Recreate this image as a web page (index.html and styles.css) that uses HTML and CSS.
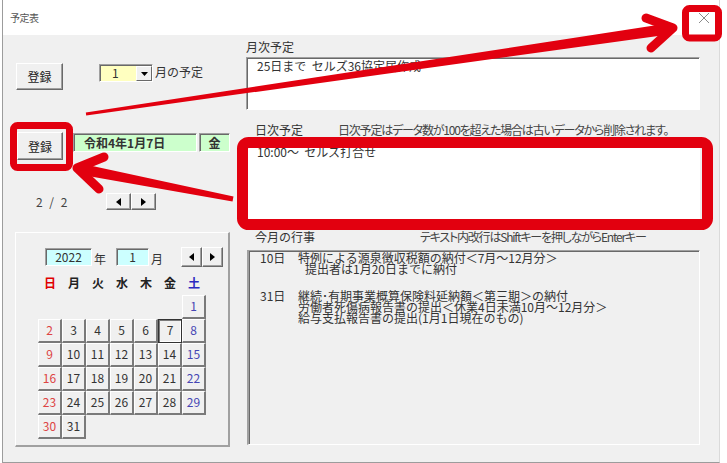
FILE: index.html
```html
<!DOCTYPE html>
<html lang="ja">
<head>
    <meta charset="UTF-8">
    <title>予定表</title>
    <link rel="stylesheet" href="styles.css">
</head>
<body>
    <div class="window">
        <div class="titlebar">
            <span class="title">予定表</span>
            <span class="close">
                <svg width="12" height="12" viewBox="0 0 12 12"><path d="M1 1L11 11M11 1L1 11" stroke="#8a8a8a" stroke-width="1"/></svg>
            </span>
        </div>

        <div class="form">
            <div class="side">
                <div class="month-row">
                    <button class="btn">登録</button>
                    <div class="combo">
                        <span class="combo-val">1</span>
                        <span class="combo-drop"><svg width="7" height="4" viewBox="0 0 7 4"><polygon points="0,0 7,0 3.5,4"/></svg></span>
                    </div>
                    <span class="combo-lbl">月の予定</span>
                </div>

                <div class="date-row">
                    <button class="btn btn-day">登録</button>
                    <span class="field green date">令和4年1月7日</span>
                    <span class="field green dow">金</span>
                </div>

                <div class="page-row">
                    <span class="pager">2 / 2</span>
                    <div class="spin">
                        <button class="spin-btn"><svg width="5" height="8" viewBox="0 0 5 8"><polygon points="5,0 5,8 0,4"/></svg></button>
                        <button class="spin-btn"><svg width="5" height="8" viewBox="0 0 5 8"><polygon points="0,0 0,8 5,4"/></svg></button>
                    </div>
                </div>

                <div class="calendar">
                    <div class="cal-head">
                        <span class="field cyan year">2022</span>
                        <span class="cal-unit">年</span>
                        <span class="field cyan mon">1</span>
                        <span class="cal-unit">月</span>
                        <div class="spin spin-cal">
                            <button class="spin-btn"><svg width="5" height="8" viewBox="0 0 5 8"><polygon points="5,0 5,8 0,4"/></svg></button>
                            <button class="spin-btn"><svg width="5" height="8" viewBox="0 0 5 8"><polygon points="0,0 0,8 5,4"/></svg></button>
                        </div>
                    </div>
                    <div class="cal-week">
                        <span class="sun">日</span><span>月</span><span>火</span><span>水</span><span>木</span><span>金</span><span class="sat">土</span>
                    </div>
                    <div class="cal-days">
                        <span class="day sat first">1</span>
                        <span class="day sun">2</span><span class="day">3</span><span class="day">4</span><span class="day">5</span><span class="day">6</span><span class="day sel">7</span><span class="day sat">8</span>
                        <span class="day sun">9</span><span class="day">10</span><span class="day">11</span><span class="day">12</span><span class="day">13</span><span class="day">14</span><span class="day sat">15</span>
                        <span class="day sun">16</span><span class="day">17</span><span class="day">18</span><span class="day">19</span><span class="day">20</span><span class="day">21</span><span class="day sat">22</span>
                        <span class="day sun">23</span><span class="day">24</span><span class="day">25</span><span class="day">26</span><span class="day">27</span><span class="day">28</span><span class="day sat">29</span>
                        <span class="day sun">30</span><span class="day">31</span>
                    </div>
                </div>
            </div>

            <div class="main">
                <div class="cap cap-month">月次予定</div>
                <div class="box monthly">25日まで&nbsp;&nbsp;セルズ36協定届作成</div>

                <div class="cap cap-daily"><span class="cap-name">日次予定</span><span class="note">日次予定はデータ数が100を超えた場合は古いデータから削除されます。</span></div>
                <div class="box daily">10:00～&nbsp;&nbsp;セルズ打合せ</div>

                <div class="cap cap-events"><span class="cap-name wide">今月の行事</span><span class="note">テキスト内改行はShiftキーを押しながらEnterキー</span></div>
                <div class="box events">
                    <div class="ev">
                        <span class="ev-day">10日</span>
                        <div class="ev-text">
                            <div>特例による源泉徴収税額の納付＜7月～12月分＞</div>
                            <div class="indent">提出者は1月20日までに納付</div>
                        </div>
                    </div>
                    <div class="ev ev-gap">
                        <span class="ev-day">31日</span>
                        <div class="ev-text">
                            <div>継続･有期事業概算保険料延納額＜第三期＞の納付</div>
                            <div>労働者死傷病報告書の提出＜休業4日未満10月～12月分＞</div>
                            <div>給与支払報告書の提出(1月1日現在のもの)</div>
                        </div>
                    </div>
                </div>
            </div>
        </div>
    </div>

    <!-- annotation marks drawn over the screenshot -->
    <svg class="marks" width="727" height="463" viewBox="0 0 727 463">
        <g fill="none" stroke="#e2000f" stroke-linejoin="round">
            <rect x="685.5" y="8.5" width="33" height="29.5" rx="4" stroke-width="7"/>
            <rect x="13.5" y="125.5" width="56" height="42" rx="4" stroke-width="7"/>
            <rect x="242.5" y="142.5" width="465" height="82" rx="6" stroke-width="11"/>
        </g>
        <g fill="#e2000f">
            <polygon points="86.2,115.5 85.8,112.5 667.2,23.6 668.8,34.4"/>
            <polygon points="233.5,196.5 232.5,201.5 80.9,174.8 83.1,164"/>
        </g>
        <g fill="none" stroke="#e2000f" stroke-width="9" stroke-linecap="round" stroke-linejoin="round">
            <polyline points="646,18 673,28 651,48"/>
            <polyline points="104,157 77,168 99,189"/>
        </g>
    </svg>
</body>
</html>
```

FILE: styles.css
```css
* { box-sizing: border-box; }
body { margin: 0; position: relative; background: #fff; font-family: "Noto Sans CJK JP", sans-serif; font-size: 12px; color: #333; }
button { font-family: inherit; font-size: 12px; color: #222; padding: 0; }

.window { width: 718px; height: 463px; margin-left: 2px; border-left: 1px solid #9c9c9c; border-right: 1px solid #dadada; border-bottom: 1px solid #9c9c9c; background: #f0f0f0; }
.titlebar { height: 35px; background: #fff; display: flex; align-items: center; justify-content: space-between; padding-left: 7px; }
.title { font-size: 10px; color: #555; letter-spacing: -0.5px; }
.close { width: 30px; height: 30px; display: flex; align-items: center; justify-content: center; }

.form { display: flex; height: 427px; }
.side { width: 234px; }
.main { flex: 1; padding-left: 9px; }

/* raised / sunken control edges */
.btn { width: 47px; height: 27px; background: #f0f0f0; border: 1px solid; border-color: #fff #696969 #696969 #fff; box-shadow: inset -1px -1px #a0a0a0; }
.field { display: flex; align-items: center; justify-content: center; border: 1px solid; border-color: #a0a0a0 #fff #fff #a0a0a0; box-shadow: inset 1px 1px #696969; line-height: 14px; }
.green { background: #ccffcc; }
.cyan { background: #ccffff; }

.month-row { display: flex; align-items: flex-start; margin-top: 28px; padding-left: 13px; }
.combo { display: flex; width: 54px; height: 18px; margin: 1px 0 0 36px; border: 1px solid; border-color: #a0a0a0 #fff #fff #a0a0a0; box-shadow: inset 1px 1px #696969; background: #ffffc0; }
.combo-val { flex: 1; padding: 1px 0 0 12px; line-height: 14px; }
.combo-drop { width: 16px; display: flex; align-items: center; justify-content: center; background: #f0f0f0; border: 1px solid; border-color: #fff #696969 #696969 #fff; margin: 1px 0 0 0; }
.combo-lbl { margin: 2px 0 0 2px; line-height: 14px; }

.date-row { display: flex; align-items: flex-start; margin-top: 42px; padding-left: 14px; }
.btn-day { width: 46px; height: 28px; }
.date { width: 124px; height: 19px; margin: 1px 0 0 10px; font-weight: bold; justify-content: flex-start; padding-left: 10px; }
.dow { width: 31px; height: 19px; margin: 1px 0 0 2px; font-weight: bold; }

.page-row { display: flex; align-items: center; margin-top: 33px; padding-left: 33px; }
.pager { width: 37px; color: #444; letter-spacing: 2px; white-space: pre; }
.spin { display: flex; margin-left: 33px; }
.spin-btn { width: 25px; height: 17px; display: flex; align-items: center; justify-content: center; background: #f0f0f0; border: 1px solid; border-color: #fff #696969 #696969 #fff; box-shadow: inset -1px -1px #a0a0a0; }

.calendar { width: 215px; height: 215px; margin: 22px 0 0 12px; border: 1px solid; border-width: 1px 2px 2px 1px; border-color: #fff #a0a0a0 #a0a0a0 #fff; padding: 14px 0 0 22px; }
.cal-head { display: flex; align-items: center; margin-left: 7px; height: 20px; }
.year { width: 47px; height: 18px; }
.mon { width: 33px; height: 18px; margin-left: 10px; }
.cal-unit { margin-left: 2px; line-height: 14px; padding-top: 4px; }
.spin-cal { margin-left: 18px; }
.spin-cal .spin-btn { width: 21px; height: 20px; }

.cal-week { display: grid; grid-template-columns: repeat(7, 24px); margin: 9px 0 5px; line-height: 14px; text-align: center; font-weight: bold; color: #222; }
.cal-week .sun { color: #e00000; }
.cal-week .sat { color: #2a2ac0; }
.cal-days { display: grid; grid-template-columns: repeat(7, 24px); grid-auto-rows: 24px; }
.day { border-style: solid; border-width: 1px 2px 2px 1px; border-color: #fff #7a7a7a #7a7a7a #fff; text-align: center; line-height: 20px; color: #333; }
.day.sun { color: #dd4444; }
.day.sat { color: #4646b4; }
.day.sel { border: 1px solid #333; box-shadow: inset 1px 1px #7a7a7a, inset -1px -1px #fff; }
.first { grid-column-start: 7; }

.cap { line-height: 14px; color: #333; white-space: nowrap; }
.cap-month { margin-top: 5px; }
.cap-daily { margin-top: 13px; padding-left: 9px; }
.cap-events { margin-top: 9px; padding-left: 9px; }
.cap-name { display: inline-block; width: 83px; }
.cap-name.wide { width: 165px; }
.note { color: #444; font-feature-settings: "palt"; letter-spacing: -1.2px; }

.box { width: 454px; border: 1px solid; border-color: #a0a0a0 #fff #fff #a0a0a0; box-shadow: inset 1px 1px #696969; }
.monthly { margin-top: 3px; height: 53px; background: #fff; padding: 1px 0 0 10px; line-height: 14px; }
.daily { margin-top: 4px; height: 80px; background: #fff; padding: 3px 0 0 10px; line-height: 14px; }
.events { margin: 6px 0 0 1px; width: 453px; height: 195px; background: #f0f0f0; border-left-width: 2px; padding: 1px 0 0 11px; line-height: 11px; }
.ev { display: flex; }
.ev-gap { margin-top: 16px; }
.ev-day { width: 38px; }
.indent { padding-left: 7px; }

.marks { position: absolute; left: 0; top: 0; pointer-events: none; }
```
